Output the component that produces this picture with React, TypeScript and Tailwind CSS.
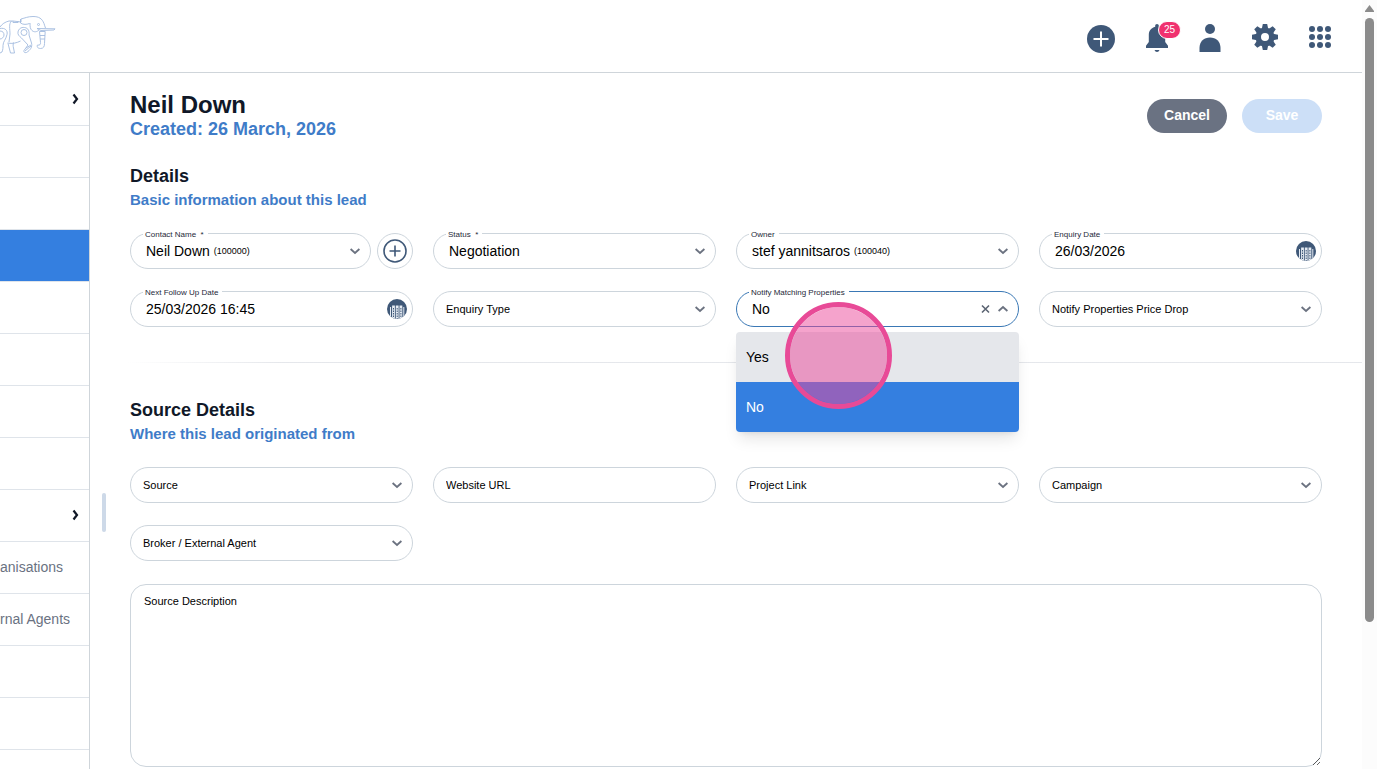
import type { ReactNode } from "react";
import clsx from "clsx";

type NavItem = { label?: string; active?: boolean; expandable?: boolean };

const navItems: NavItem[] = [
  { expandable: true },
  {},
  {},
  { active: true },
  {},
  {},
  {},
  {},
  { expandable: true },
  { label: "anisations" },
  { label: "rnal Agents" },
  {},
  {},
  {},
];

function Elephant() {
  return (
    <svg width="58" height="44" viewBox="0 14 58 44" fill="none" stroke="#a3bbdf" strokeWidth=".9" strokeLinejoin="round">
      <path d="M0 27c2-3 5-5 9-6h4l8 1v-3c4-1 7-2.500 12-2.500 6 0 9 2 11 7 .6 1.500.8 3 1.500 4.500" />
      <path d="M13 21v1.500h5V21M11.500 21c-3 3-1.500 8-1.500 13l-1 8M20.500 19v4c3 2 6 1.500 9 .5" />
      <path d="M30 23c0 3 0 6 2 7.500 2 2 5 1.500 7-.5" />
      <circle cx="38.500" cy="24.500" r="1" />
      <path d="M37 28.500l18 .3-1 1.200-13 .5z" />
      <path d="M39.500 31.500l1 11c.2 2-.8 3-3 2.500-1 2 .5 3.500 3 3.500 3 0 4-2 4-5l.7-12zM40 35.500h5M40.300 39h4.500" />
      <path d="M0 28.500c5-1 8 2 7 6-1 5-4 7-4 11 0 2 0 4-1 6.500L0 53" />
      <path d="M0 31c3 0 4 2 4 4s-2 4-4 4" />
      <path d="M7.500 43c5 1 9 0 13-2M8 43.500l2.500 9.500h4l-1-5c-.5-2-.5-3.500 0-5.500" />
      <path d="M18 32c.5-3 3-5 6.500-4.500 4 .5 5 4 4.500 7.500l2.500 8c1 4-1 7-5 9.500-2 .5-3-.5-2.500-2l4-5.500-6.500-7c-2.500-2-4-3.500-3.500-6z" />
      <circle cx="24" cy="32.500" r="3" />
      <path d="M26 48l5-3M25 51l6-5" />
    </svg>
  );
}

function NavArrow() {
  return (
    <svg width="8" height="12" viewBox="0 0 8 12" fill="none" stroke="#111827" strokeWidth="2.200">
      <path d="M2.500 1.500L6 6l-3.500 4.500" />
    </svg>
  );
}

function Chevron({ up }: { up?: boolean }) {
  return (
    <svg
      width="10"
      height="8"
      viewBox="0 0 10 8"
      fill="none"
      stroke="#6b7280"
      strokeWidth="1.800"
      className={clsx("pointer-events-none shrink-0", up && "rotate-180")}
    >
      <path d="M.6 2L5 6l4.400-4" />
    </svg>
  );
}

function CalendarIcon() {
  return (
    <svg width="20" height="20" viewBox="0 0 20 20">
      <defs>
        <clipPath id="cal">
          <circle cx="10" cy="10" r="10" />
        </clipPath>
      </defs>
      <g clipPath="url(#cal)">
        <rect width="20" height="20" fill="#3f5878" />
        <path d="M3.500 20V8M16.800 20V8" stroke="#e5ebf3" strokeWidth="1" />
        <path d="M6.500 6.500V20M10.200 6.500V20M13.900 6.500V20" stroke="#e5ebf3" strokeWidth="2.800" />
        <path d="M6.500 9v11M10.200 9v11M13.900 9v11" stroke="#3f5878" strokeWidth="1" strokeDasharray="1.500 1" />
      </g>
    </svg>
  );
}

function Gear() {
  const teeth = [0, 45, 90, 135, 180, 225, 270, 315];
  return (
    <svg width="26" height="26" viewBox="0 0 26 26" fill="#3f5878">
      {teeth.map((a) => (
        <path key={a} d="M9.800 5l1-5h4.400l1 5z" transform={`rotate(${a} 13 13)`} />
      ))}
      <path fillRule="evenodd" d="M13 3.500a9.500 9.500 0 100 19 9.500 9.500 0 000-19zm0 5.500a4 4 0 110 8 4 4 0 010-8z" />
    </svg>
  );
}

function Header() {
  const dots = [3, 11, 19];
  return (
    <header className="flex h-[73px] shrink-0 items-center justify-between border-b border-[#cfd5da] pr-[31px]">
      <Elephant />
      <div className="flex items-center gap-[31px] pt-px">
        <button aria-label="Add">
          <svg width="28" height="28" viewBox="0 0 28 28" className="mt-1">
            <circle cx="14" cy="14" r="14" fill="#3f5878" />
            <path d="M14 6.500v15M6.500 14h15" stroke="#fff" strokeWidth="2" />
          </svg>
        </button>
        <button aria-label="Notifications" className="relative">
          <svg width="22" height="28" viewBox="1 0 22 28" className="mt-0.5" fill="#3f5878">
            <path d="M12 0c1 0 1.800.8 1.800 1.800v1c4 1 6.400 4.200 6.400 8.200v7l3 4v2H.8v-2l3-4v-7c0-4 2.400-7.200 6.400-8.200v-1C10.200.8 11 0 12 0z" />
            <path d="M9.500 26h5c-.5 1.300-1.300 2-2.500 2s-2-.7-2.500-2z" />
          </svg>
          <span className="absolute -top-px left-3 h-[18px] w-[23px] rounded-full border border-white bg-[#f0316f] text-center text-[10px] leading-4 text-white">
            25
          </span>
        </button>
        <button aria-label="Account">
          <svg width="22" height="28" viewBox="0 0 22 28" className="mt-0.5" fill="#3f5878">
            <circle cx="11" cy="5" r="5" />
            <path d="M.5 28v-4C.5 17.500 5 13.500 11 13.500S21.500 17.500 21.500 24v4z" />
          </svg>
        </button>
        <button aria-label="Settings">
          <Gear />
        </button>
        <button aria-label="Apps">
          <svg width="22" height="22" viewBox="0 0 22 22" fill="#3f5878">
            {dots.map((y) => dots.map((x) => <circle key={`${x}-${y}`} cx={x} cy={y} r="3" />))}
          </svg>
        </button>
      </div>
    </header>
  );
}

function Sidebar() {
  return (
    <nav className="w-[90px] shrink-0 overflow-hidden border-r border-[#cfd5da] pt-px">
      {navItems.map((item, i) => (
        <a
          key={i}
          href="#"
          className={clsx(
            "flex h-[52px] items-center border-b border-[#dfe4ea] pb-0.5 text-sm text-gray-500",
            item.active && "bg-[#347fe0]",
          )}
        >
          {item.label}
          {item.expandable && (
            <span className="ml-auto pr-2.5">
              <NavArrow />
            </span>
          )}
        </a>
      ))}
    </nav>
  );
}

type FieldProps = {
  id: string;
  label: string;
  value?: string;
  code?: string;
  required?: boolean;
  open?: boolean;
  kind?: "select" | "date" | "text";
  children?: ReactNode;
};

function Field({ id, label, value, code, required, open, kind = "select", children }: FieldProps) {
  return (
    <div
      className={clsx(
        "relative flex h-9 min-w-0 flex-1 items-center rounded-full border",
        open ? "border-[#3a78b5]" : "border-[#cdd5dc]",
        value ? "pl-[15px]" : "pl-3",
        kind === "date" ? "pr-[5px]" : "pr-2.5",
      )}
    >
      {value && (
        <label htmlFor={id} className="absolute -top-[5px] left-3 bg-white px-0.5 pr-1 text-[8px] leading-3 whitespace-pre text-gray-800">
          {label}
          {required && "  *"}
        </label>
      )}
      {kind === "select" ? (
        <select
          id={id}
          aria-label={value ? undefined : label}
          defaultValue={value ?? label}
          className={clsx(
            "appearance-none bg-transparent text-black outline-none",
            value ? "field-sizing-content text-sm" : "w-full text-[11px]",
          )}
        >
          <option>{value ?? label}</option>
        </select>
      ) : (
        <input
          id={id}
          aria-label={value ? undefined : label}
          defaultValue={value}
          placeholder={value ? undefined : label}
          className={clsx(
            "w-full min-w-0 bg-transparent text-black outline-none placeholder:text-black",
            value ? "text-sm" : "text-[11px]",
          )}
        />
      )}
      {code && <span className="pt-0.5 pl-1 text-[9px] text-black">{code}</span>}
      {kind === "select" && (
        <span className="ml-auto flex items-center gap-2">
          {open && (
            <button aria-label="Clear">
              <svg width="9" height="10" viewBox="0 0 9 10" stroke="#5b6472" strokeWidth="1.600">
                <path d="M1 1.500l7 7M8 1.500l-7 7" />
              </svg>
            </button>
          )}
          <Chevron up={open} />
        </span>
      )}
      {kind === "date" && (
        <button aria-label={`Pick ${label}`}>
          <CalendarIcon />
        </button>
      )}
      {children}
    </div>
  );
}

function SectionHeading({ title, subtitle }: { title: string; subtitle: string }) {
  return (
    <div>
      <h2 className="text-lg leading-6 font-bold text-gray-900">{title}</h2>
      <p className="text-[15px] leading-6 font-bold text-[#3f7cc8]">{subtitle}</p>
    </div>
  );
}

function Scrollbar() {
  return (
    <div className="flex w-[15px] shrink-0 flex-col items-center bg-[#fcfcfc] pt-[5px]">
      <svg width="9" height="7" viewBox="0 0 9 7" fill="#8b8b8b">
        <path d="M4.500 0L9 6v1H0V6z" />
      </svg>
      <div className="mt-1.5 h-[79%] w-[9px] rounded-full bg-[#8b8b8b]" />
    </div>
  );
}

export default function App() {
  return (
    <div className="flex h-screen overflow-hidden bg-white font-['Liberation_Sans',Arial,sans-serif]">
      <div className="flex min-w-0 flex-1 flex-col">
        <Header />
        <div className="flex min-h-0 flex-1">
          <Sidebar />
          <main className="relative min-w-0 flex-1 overflow-hidden pt-5">
            <span className="absolute top-[420px] left-3 h-[39px] w-1 rounded-full bg-[#cdd9e8]" />
            <div className="flex items-start justify-between px-10">
              <div>
                <h1 className="text-2xl leading-6 font-bold text-gray-900">Neil Down</h1>
                <p className="text-lg leading-6 font-bold text-[#3f7cc8]">Created: 26 March, 2026</p>
              </div>
              <div className="flex gap-[15px] pt-1.5 text-sm font-bold text-white">
                <button className="h-[34px] w-20 rounded-full bg-gray-500 pb-0.5">Cancel</button>
                <button className="h-[34px] w-20 rounded-full bg-[#ccdff7] pb-0.5">Save</button>
              </div>
            </div>

            <section className="px-10 pt-[23px]">
              <SectionHeading title="Details" subtitle="Basic information about this lead" />
              <div className="mt-[21px] grid grid-cols-4 gap-x-5 gap-y-[22px]">
                <div className="flex gap-1.5">
                  <Field id="contact" label="Contact Name" value="Neil Down" code="(100000)" required />
                  <button
                    aria-label="Add contact"
                    className="flex size-9 items-center justify-center rounded-full border border-[#cdd5dc]"
                  >
                    <svg width="24" height="24" viewBox="0 0 24 24" fill="none" stroke="#3f5878" strokeWidth="1.600">
                      <circle cx="12" cy="12" r="11" />
                      <path d="M12 6.500v11M6.500 12h11" />
                    </svg>
                  </button>
                </div>
                <Field id="status" label="Status" value="Negotiation" required />
                <Field id="owner" label="Owner" value="stef yannitsaros" code="(100040)" />
                <Field id="enquiry-date" label="Enquiry Date" value="26/03/2026" kind="date" />
                <Field id="follow-up" label="Next Follow Up Date" value="25/03/2026 16:45" kind="date" />
                <Field id="enquiry-type" label="Enquiry Type" />
                <Field id="notify-matching" label="Notify Matching Properties" value="No" open>
                  <div
                    role="listbox"
                    className="absolute top-10 -right-px -left-px z-10 flex flex-col overflow-hidden rounded-sm text-sm shadow-lg"
                  >
                    <button role="option" aria-selected="false" className="h-[50px] bg-gray-200 px-2.5 text-left text-black">
                      Yes
                    </button>
                    <button role="option" aria-selected="true" className="h-[50px] bg-[#347fe0] px-2.5 text-left text-white">
                      No
                    </button>
                  </div>
                  <span className="pointer-events-none absolute top-2.5 left-12 z-20 size-[107px] rounded-full border-5 border-[#e84a97] bg-[#ec4899]/50 bg-clip-padding" />
                </Field>
                <Field id="price-drop" label="Notify Properties Price Drop" />
              </div>
            </section>

            <hr className="mt-[35px] h-px border-0 bg-linear-to-r from-transparent from-3% to-gray-200 to-15%" />

            <section className="px-10 pt-[35px]">
              <SectionHeading title="Source Details" subtitle="Where this lead originated from" />
              <div className="mt-[21px] grid grid-cols-4 gap-x-5 gap-y-[22px]">
                <Field id="source" label="Source" />
                <Field id="website" label="Website URL" kind="text" />
                <Field id="project" label="Project Link" />
                <Field id="campaign" label="Campaign" />
                <Field id="broker" label="Broker / External Agent" />
              </div>
              <textarea
                aria-label="Source Description"
                placeholder="Source Description"
                className="mt-[23px] block h-[183px] w-full rounded-2xl border border-[#cdd5dc] px-[13px] py-2 text-[11px] leading-4 outline-none placeholder:text-black"
              />
            </section>
          </main>
        </div>
      </div>
      <Scrollbar />
    </div>
  );
}
